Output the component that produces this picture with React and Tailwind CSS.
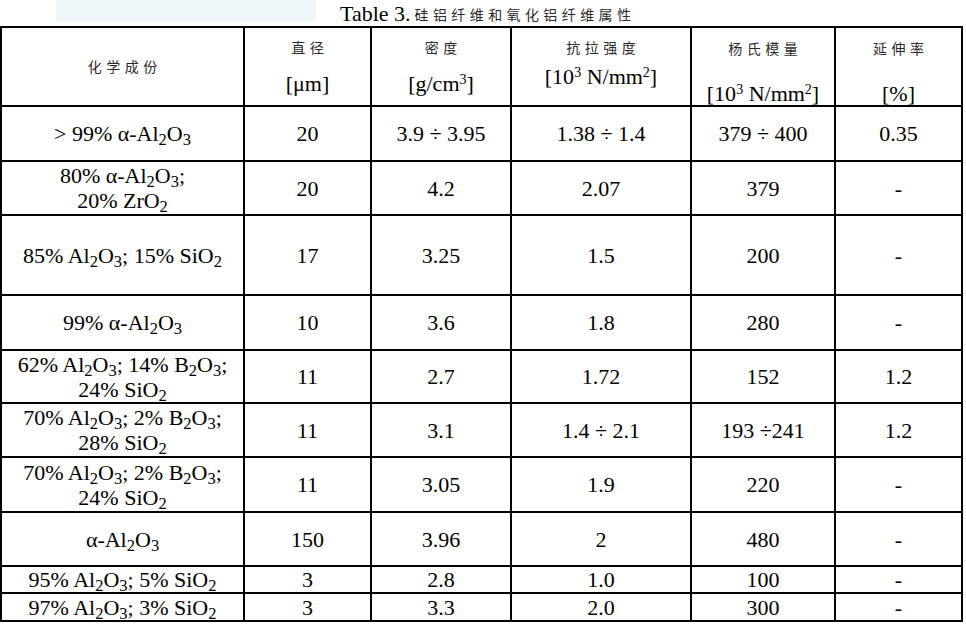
import React from "react";

const serif = { fontFamily: '"Liberation Serif", "Times New Roman", serif' };
const cjk = { fontFamily: '"Noto Sans CJK SC", "Noto Sans", sans-serif' };

function Al() {
  return (
    <>
      Al<sub>2</sub>O<sub>3</sub>
    </>
  );
}
function Si() {
  return (
    <>
      SiO<sub>2</sub>
    </>
  );
}
function B() {
  return (
    <>
      B<sub>2</sub>O<sub>3</sub>
    </>
  );
}

const rows = [
  [<>&gt; 99% α-<Al /></>, "20", "3.9 ÷ 3.95", "1.38 ÷ 1.4", "379 ÷ 400", "0.35"],
  [<>80% α-<Al />;<br />20% ZrO<sub>2</sub></>, "20", "4.2", "2.07", "379", "-"],
  [<>85% <Al />; 15% <Si /></>, "17", "3.25", "1.5", "200", "-"],
  [<>99% α-<Al /></>, "10", "3.6", "1.8", "280", "-"],
  [<>62% <Al />; 14% <B />;<br />24% <Si /></>, "11", "2.7", "1.72", "152", "1.2"],
  [<>70% <Al />; 2% <B />;<br />28% <Si /></>, "11", "3.1", "1.4 ÷ 2.1", "193 ÷241", "1.2"],
  [<>70% <Al />; 2% <B />;<br />24% <Si /></>, "11", "3.05", "1.9", "220", "-"],
  [<>α-<Al /></>, "150", "3.96", "2", "480", "-"],
  [<>95% <Al />; 5% <Si /></>, "3", "2.8", "1.0", "100", "-"],
  [<>97% <Al />; 3% <Si /></>, "3", "3.3", "2.0", "300", "-"],
];

function HeadLabel({ children }) {
  return (
    <div
      className="mt-[9px] h-[20px] leading-[20px] text-[14px] tracking-[4.5px] pl-[4.5px] text-[#2a2a2a]"
      style={cjk}
    >
      {children}
    </div>
  );
}

function Sup({ children }) {
  return <sup className="text-[14px]">{children}</sup>;
}

export default function App() {
  return (
    <div className="w-[966px] h-[625px] bg-white text-black" style={serif}>
      <div className="flex h-[26px]">
        <div className="ml-[56px] w-[260px] h-[22px] bg-[#eef7fa]" />
        <div className="ml-[24px] flex items-end pb-[1px]">
          <span className="text-[22px] leading-[22px]">Table 3.</span>
          <span
            className="ml-[4px] text-[14px] leading-[18px] tracking-[4.4px] text-[#2a2a2a] mb-[2px]"
            style={cjk}
          >
            硅铝纤维和氧化铝纤维属性
          </span>
        </div>
      </div>
      <div className="grid w-[963px] bg-black p-[2px] gap-[2px] grid-cols-[241px_125px_138px_178px_142px_125px] grid-rows-[77px_53px_52px_78px_53px_51px_52px_53px_52px_25px_26px]">
        <div className="bg-white flex items-center justify-center">
          <div className="text-[14px] tracking-[4.5px] pl-[4.5px] text-[#2a2a2a]" style={cjk}>
            化学成份
          </div>
        </div>
        <div className="bg-white flex flex-col items-center">
          <HeadLabel>直径</HeadLabel>
          <div className="mt-[15px] text-[22px] leading-[24px]">[μm]</div>
        </div>
        <div className="bg-white flex flex-col items-center">
          <HeadLabel>密度</HeadLabel>
          <div className="mt-[15px] text-[22px] leading-[24px]">
            [g/cm<Sup>3</Sup>]
          </div>
        </div>
        <div className="bg-white flex flex-col items-center">
          <HeadLabel>抗拉强度</HeadLabel>
          <div className="mt-[8px] text-[22px] leading-[24px]">
            [10<Sup>3</Sup> N/mm<Sup>2</Sup>]
          </div>
        </div>
        <div className="bg-white flex flex-col items-center">
          <div className="mt-[1px]">
            <HeadLabel>杨氏模量</HeadLabel>
          </div>
          <div className="mt-[24px] text-[22px] leading-[24px]">
            [10<Sup>3</Sup> N/mm<Sup>2</Sup>]
          </div>
        </div>
        <div className="bg-white flex flex-col items-center">
          <div className="mt-[1px]">
            <HeadLabel>延伸率</HeadLabel>
          </div>
          <div className="mt-[24px] text-[22px] leading-[24px]">[%]</div>
        </div>
        {rows.map((r, i) =>
          r.map((c, j) => (
            <div
              key={i + "-" + j}
              className="bg-white flex items-center justify-center text-center text-[22px] leading-[25px]"
            >
              <div>{c}</div>
            </div>
          ))
        )}
      </div>
    </div>
  );
}
